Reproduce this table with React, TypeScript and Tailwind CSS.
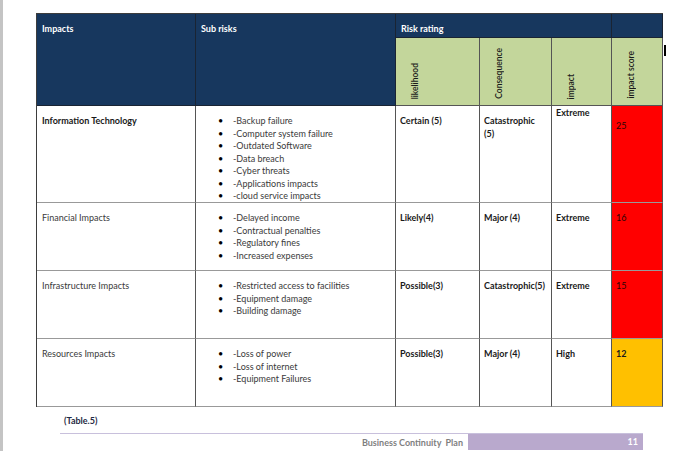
import React from 'react'

interface RiskRow {
  impact: string
  impactBold?: boolean
  risks: string[]
  likelihood: string
  consequence: React.ReactNode
  level: string
  levelPad: string
  score: string
  scorePad: string
  scoreBg: string
  scoreBold?: boolean
  height: string
}

const rows: RiskRow[] = [
  {
    impact: 'Information Technology',
    impactBold: true,
    risks: [
      '-Backup failure',
      '-Computer system failure',
      '-Outdated Software',
      '-Data breach',
      '-Cyber threats',
      '-Applications impacts',
      '-cloud service impacts',
    ],
    likelihood: 'Certain (5)',
    consequence: (
      <>
        Catastrophic
        <br />
        (5)
      </>
    ),
    level: 'Extreme',
    levelPad: 'pt-[1px]',
    score: '25',
    scorePad: 'pt-[14px]',
    scoreBg: 'bg-[#ff0000]',
    height: 'h-[97px]',
  },
  {
    impact: 'Financial Impacts',
    risks: ['-Delayed income', '-Contractual penalties', '-Regulatory fines', '-Increased expenses'],
    likelihood: 'Likely(4)',
    consequence: 'Major (4)',
    level: 'Extreme',
    levelPad: 'pt-[9px]',
    score: '16',
    scorePad: 'pt-[9px]',
    scoreBg: 'bg-[#ff0000]',
    height: 'h-[68px]',
  },
  {
    impact: 'Infrastructure Impacts',
    risks: ['-Restricted access to facilities', '-Equipment damage', '-Building damage'],
    likelihood: 'Possible(3)',
    consequence: 'Catastrophic(5)',
    level: 'Extreme',
    levelPad: 'pt-[9px]',
    score: '15',
    scorePad: 'pt-[9px]',
    scoreBg: 'bg-[#ff0000]',
    height: 'h-[68px]',
  },
  {
    impact: 'Resources Impacts',
    risks: ['-Loss of power', '-Loss of internet', '-Equipment Failures'],
    likelihood: 'Possible(3)',
    consequence: 'Major (4)',
    level: 'High',
    levelPad: 'pt-[9px]',
    score: '12',
    scorePad: 'pt-[9px]',
    scoreBg: 'bg-[#ffc000]',
    scoreBold: true,
    height: 'h-[68px]',
  },
]

const vertical = ['likelihood', 'Consequence', 'impact', 'impact score']

export default function App() {
  return (
    <div className="relative w-[680px] h-[451px] bg-white border-l-[3px] border-[#c4c4c4] overflow-hidden font-['Lato','Liberation_Sans',sans-serif] text-[9px] leading-[12.5px] text-[#333]">
      <div className="pl-[33px] pt-[13px]">
        <div className="grid grid-cols-[159px_200px_84px_72px_60px_51px] w-[627px] border-l border-t border-[#3d3d3d]">
          {/* header */}
          <div className="row-span-2 bg-[#17375e] border-r border-b border-[#1a2433] px-[5px] pt-[9px] font-bold text-white">
            Impacts
          </div>
          <div className="row-span-2 bg-[#17375e] border-r border-b border-[#1a2433] px-[5px] pt-[9px] font-bold text-white">
            Sub risks
          </div>
          <div className="col-span-3 h-[24px] bg-[#17375e] border-r border-b border-[#1a2433] px-[5px] pt-[9px] font-bold text-white">
            Risk rating
          </div>
          <div className="h-[24px] bg-[#17375e] border-r border-b border-[#1a2433]" />
          {vertical.map(v => (
            <div
              key={v}
              className="h-[68px] bg-[#c3d69b] border-r border-b border-[#555] flex items-end pl-[14px] pb-[6px]"
            >
              <span className="[writing-mode:vertical-rl] rotate-180 font-semibold text-[8.5px] leading-[11px] text-[#1a1a1a] whitespace-nowrap">
                {v}
              </span>
            </div>
          ))}

          {/* body */}
          {rows.map(r => (
            <React.Fragment key={r.impact}>
              <div className={`${r.height} border-r border-b border-[#555] border-b-[#999] px-[5px] pt-[9px] ${r.impactBold ? 'font-bold text-[#1a1a1a]' : 'text-[#3a3a3a]'}`}>
                {r.impact}
              </div>
              <div className={`${r.height} border-r border-b border-[#555] border-b-[#999] pl-[22px] pt-[9px] text-[#3a3a3a]`}>
                <ul>
                  {r.risks.map(s => (
                    <li key={s} className="flex">
                      <span className="w-[15px] text-black">•</span>
                      <span>{s}</span>
                    </li>
                  ))}
                </ul>
              </div>
              <div className={`${r.height} border-r border-b border-[#555] border-b-[#999] px-[4px] pt-[9px] font-bold text-[#1a1a1a]`}>
                {r.likelihood}
              </div>
              <div className={`${r.height} border-r border-b border-[#555] border-b-[#999] pl-[4px] pt-[9px] font-bold text-[#1a1a1a] whitespace-nowrap`}>
                {r.consequence}
              </div>
              <div className={`${r.height} border-r border-b border-[#555] border-b-[#999] px-[4px] ${r.levelPad} font-bold text-[#1a1a1a]`}>
                {r.level}
              </div>
              <div className={`${r.height} ${r.scoreBg} border-r border-b border-[#555] border-b-[#999] px-[4px] ${r.scorePad} ${r.scoreBold ? 'font-bold text-[#1a1a1a]' : 'text-[#2a0505]'}`}>
                {r.score}
              </div>
            </React.Fragment>
          ))}
        </div>

        <div className="pl-[28px] pt-[8px] h-[26px] font-bold text-[#1f2a44]">(Table.5)</div>

        <div className="flex ml-[24px] w-[583px] border-t border-[#c8c0dc]">
          <div className="flex-1 text-right pr-[5px] pt-[3px] font-bold text-[#7f7f7f]">Business Continuity&nbsp; Plan</div>
          <div className="w-[175px] h-[16px] bg-[#b9a9cd] text-right pr-[5px] pt-[2px] font-bold text-white">11</div>
        </div>
      </div>

      <div className="absolute left-[661px] top-[45px] w-[2px] h-[11px] bg-black" />
    </div>
  )
}
